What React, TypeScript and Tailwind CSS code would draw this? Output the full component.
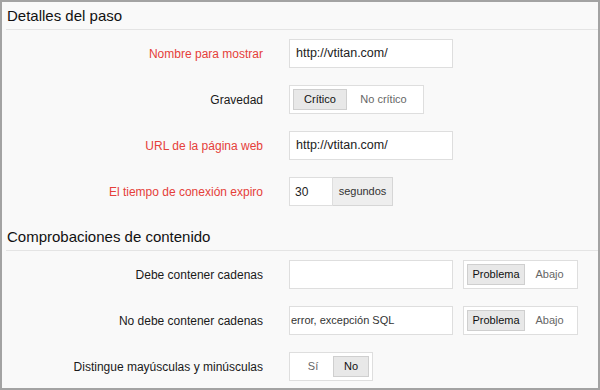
import type { ReactNode } from "react";

const font = { fontFamily: '"Liberation Sans", Arial, Helvetica, sans-serif' };

function SectionHeader({ title, className = "" }: { title: string; className?: string }) {
  return (
    <div className={`ml-1 h-[28px] flex items-center pl-[1px] pt-[1px] border-b border-[#e4e4e4] text-[15px] text-[#111] ${className}`}>
      {title}
    </div>
  );
}

function Row({ label, required, children }: { label: string; required?: boolean; children: ReactNode }) {
  return (
    <div className="flex items-center h-[29px]">
      <div className={`w-[261px] text-right text-[12px] ${required ? "text-[#e5403a]" : "text-[#1a1a1a]"}`}>{label}</div>
      <div className="ml-[26px] flex items-center gap-[10px]">{children}</div>
    </div>
  );
}

function TextInput({ value, small }: { value: string; small?: boolean }) {
  return (
    <div
      className={`w-[164px] h-[29px] bg-white border border-[#dedede] flex items-center ${
        small ? "pl-[1px] text-[11px] text-[#333]" : "pl-[6px] text-[12.5px] text-[#222]"
      }`}
    >
      {value}
    </div>
  );
}

function Toggle({ options, selected, widths }: { options: string[]; selected: number; widths: string[] }) {
  return (
    <div className="h-[29px] bg-white border border-[#dedede] flex items-center px-[3px]">
      {options.map((o, i) =>
        i === selected ? (
          <div
            key={o}
            className={`${widths[i]} h-[21px] bg-[#e8e8e8] border border-[#cfcfcf] flex items-center justify-center text-[11px] text-[#111]`}
          >
            {o}
          </div>
        ) : (
          <div key={o} className={`${widths[i]} h-[21px] flex items-center justify-center text-[11px] text-[#666]`}>
            {o}
          </div>
        )
      )}
    </div>
  );
}

export default function App() {
  return (
    <div style={font} className="w-[600px] h-[390px] border-2 border-[#a3a3a3] bg-[#f9f9f9] overflow-hidden">
      <SectionHeader title="Detalles del paso" />
      <div className="flex flex-col gap-[17px] pt-[9px]">
        <Row label="Nombre para mostrar" required>
          <TextInput value="http://vtitan.com/" />
        </Row>
        <Row label="Gravedad">
          <Toggle options={["Crítico", "No crítico"]} selected={0} widths={["w-[54px]", "w-[73px]"]} />
        </Row>
        <Row label="URL de la página web" required>
          <TextInput value="http://vtitan.com/" />
        </Row>
        <Row label="El tiempo de conexión expiro" required>
          <div className="flex h-[29px]">
            <div className="w-[44px] bg-white border border-[#dedede] flex items-center pl-[5px] text-[12px] text-[#222]">30</div>
            <div className="w-[60px] bg-[#eeeeee] border border-l-0 border-[#d6d6d6] flex items-center justify-center text-[11px] text-[#333]">
              segundos
            </div>
          </div>
        </Row>
      </div>
      <SectionHeader title="Comprobaciones de contenido" className="mt-[17px]" />
      <div className="flex flex-col gap-[17px] pt-[9px]">
        <Row label="Debe contener cadenas">
          <TextInput value="" />
          <Toggle options={["Problema", "Abajo"]} selected={0} widths={["w-[58px]", "w-[49px]"]} />
        </Row>
        <Row label="No debe contener cadenas">
          <TextInput value="error, excepción SQL" small />
          <Toggle options={["Problema", "Abajo"]} selected={0} widths={["w-[58px]", "w-[49px]"]} />
        </Row>
        <Row label="Distingue mayúsculas y minúsculas">
          <Toggle options={["Sí", "No"]} selected={1} widths={["w-[40px]", "w-[36px]"]} />
        </Row>
      </div>
    </div>
  );
}
